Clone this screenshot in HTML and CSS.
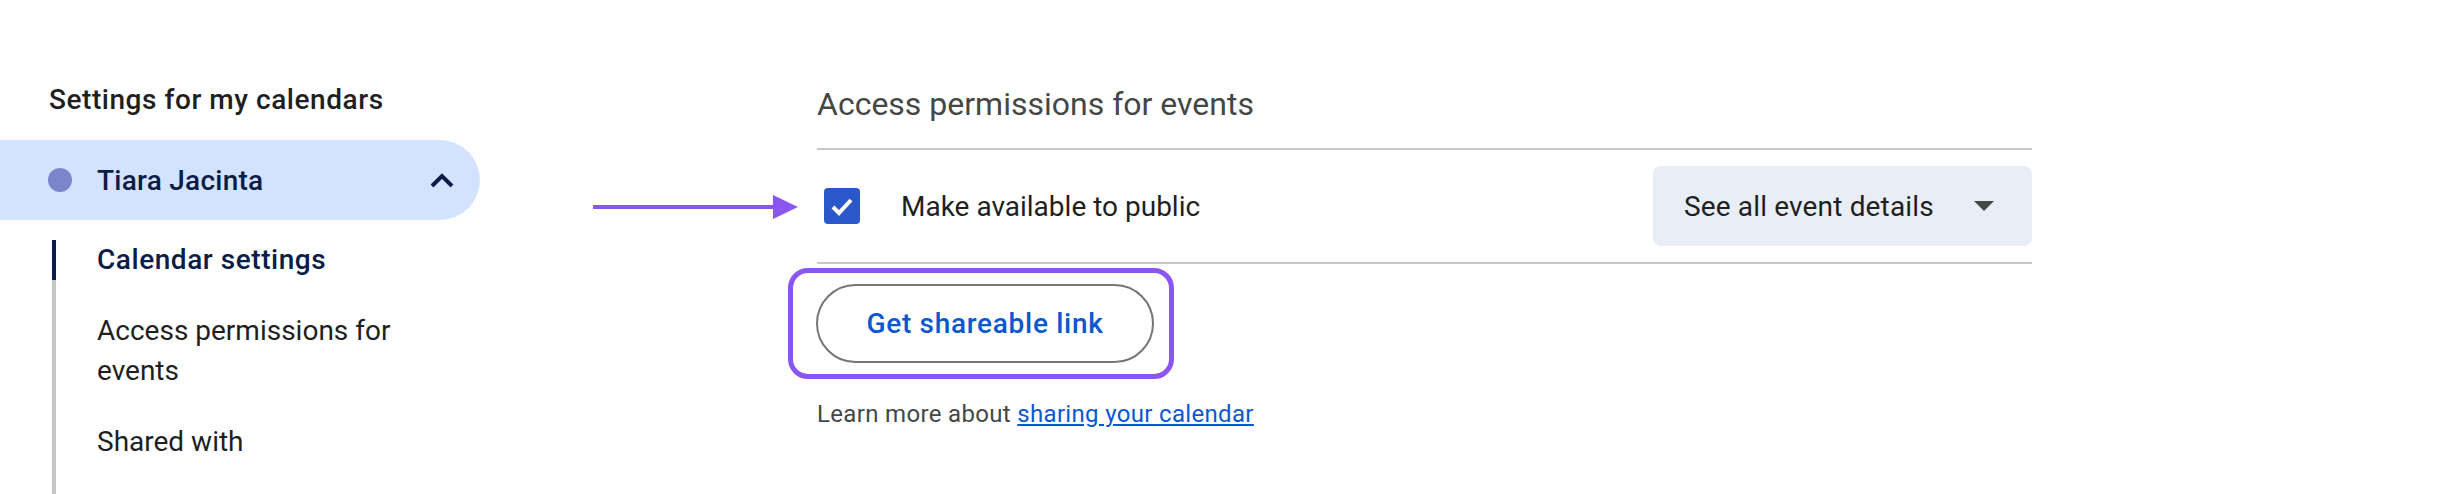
FILE: index.html
```html
<!DOCTYPE html>
<html lang="en">
<head>
  <meta charset="UTF-8">
  <title>Calendar settings</title>
  <link rel="stylesheet" href="styles.css">
</head>
<body>

<div class="page">
  <div class="sidebar">
    <h3 class="side-title">Settings for my calendars</h3>

    <div class="calendar-pill">
      <span class="dot"></span>
      <span class="cal-name">Tiara Jacinta</span>
      <svg class="chevron" width="26" height="16" viewBox="0 0 26 16">
        <path d="M3 14 L13 4 L23 14" fill="none" stroke="#0b1c48" stroke-width="4"/>
      </svg>
    </div>

    <div class="nav-list">
      <div class="nav-item active">Calendar settings</div>
      <div class="nav-item">Access permissions for events</div>
      <div class="nav-item">Shared with</div>
    </div>
  </div>

  <div class="main">
    <!-- annotation arrow -->
    <svg class="arrow" width="206" height="26" viewBox="0 0 206 26">
      <line x1="0" y1="13" x2="182" y2="13" stroke="#8b55f2" stroke-width="4"/>
      <polygon points="180,1 205,13 180,25" fill="#8b55f2"/>
    </svg>

    <h2 class="section-title">Access permissions for events</h2>

    <div class="perm-row">
      <span class="checkbox">
        <svg width="36" height="36" viewBox="0 0 36 36">
          <path d="M9 19 L15 25 L27 12" fill="none" stroke="#fff" stroke-width="4"/>
        </svg>
      </span>
      <span class="perm-label">Make available to public</span>
      <div class="select">
        <span>See all event details</span>
        <span class="caret"></span>
      </div>
    </div>

    <div class="highlight">
      <button class="link-btn">Get shareable link</button>
    </div>

    <p class="learn">Learn more about <a href="#">sharing your calendar</a></p>
  </div>
</div>

</body>
</html>
```

FILE: styles.css
```css
body {
  margin: 0;
  font-family: Roboto, 'Noto Sans', sans-serif;
  background: #fff;
  color: #1f1f1f;
  overflow: hidden;
}

.page {
  display: flex;
  height: 494px;
}

/* sidebar */

.sidebar {
  width: 480px;
  flex-shrink: 0;
  padding-top: 80px;
}

.side-title {
  margin: 0 0 20px 49px;
  font-size: 28px;
  font-weight: 500;
  letter-spacing: 0.55px;
  line-height: 40px;
  color: #1f1f1f;
}

.calendar-pill {
  height: 80px;
  background: #d3e3fd;
  border-radius: 0 40px 40px 0;
  display: flex;
  align-items: center;
  padding: 0 25px 0 48px;
}

.dot {
  width: 24px;
  height: 24px;
  border-radius: 50%;
  background: #7986cb;
}

.cal-name {
  margin-left: 25px;
  font-size: 28px;
  font-weight: 500;
  letter-spacing: 0.25px;
  color: #0b1c48;
  flex-grow: 1;
}

.nav-list {
  margin: 20px 0 0 52px;
  border-left: 4px solid #c7c7c7;
  padding-bottom: 32px;
  display: flex;
  flex-direction: column;
  gap: 31px;
}

.nav-item {
  padding-left: 41px;
  width: 330px;
  font-size: 28px;
  line-height: 40px;
  color: #1f1f1f;
}

.nav-item.active {
  margin-left: -4px;
  border-left: 4px solid #0b1c48;
  color: #0b1c48;
  font-weight: 500;
  letter-spacing: 0.55px;
}

/* main */

.main {
  position: relative;
  margin-left: 337px;
  width: 1215px;
  padding-top: 80px;
}

.arrow {
  position: absolute;
  left: -224px;
  top: 194px;
}

.section-title {
  margin: 0 0 20px;
  font-size: 32px;
  font-weight: 400;
  line-height: 48px;
  color: #444746;
}

.perm-row {
  display: flex;
  align-items: center;
  height: 112px;
  border-top: 2px solid #c7c7c7;
  border-bottom: 2px solid #c7c7c7;
}

.checkbox {
  width: 36px;
  height: 36px;
  margin-left: 7px;
  border-radius: 4px;
  background: #2a57c9;
  display: flex;
}

.perm-label {
  margin-left: 41px;
  font-size: 28px;
  flex-grow: 1;
}

.select {
  width: 379px;
  height: 80px;
  box-sizing: border-box;
  background: #e9eef6;
  border-radius: 8px;
  display: flex;
  align-items: center;
  justify-content: space-between;
  padding: 0 38px 0 31px;
  font-size: 28px;
  letter-spacing: 0.15px;
  color: #1f1f1f;
}

.caret {
  width: 0;
  height: 0;
  border-left: 10px solid transparent;
  border-right: 10px solid transparent;
  border-top: 10px solid #444746;
}

.highlight {
  display: inline-block;
  margin: 4px 0 0 -29px;
  padding: 11px 15px 11px 23px;
  border: 5px solid #8b55f2;
  border-radius: 20px;
}

.link-btn {
  display: block;
  width: 338px;
  height: 79px;
  border: 2px solid #747775;
  border-radius: 40px;
  background: #fff;
  font-family: inherit;
  font-size: 28px;
  font-weight: 500;
  letter-spacing: 0.7px;
  color: #0b57d0;
}

.learn {
  margin: 19px 0 0;
  font-size: 24px;
  letter-spacing: 0.33px;
  line-height: 32px;
  color: #444746;
}

.learn a {
  color: #0b57d0;
}
```
